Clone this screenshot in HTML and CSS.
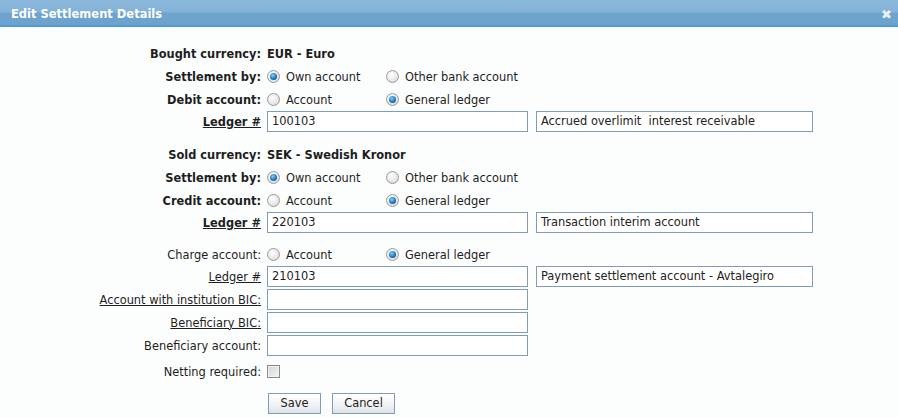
FILE: index.html
```html
<!DOCTYPE html>
<html>
<head>
<meta charset="utf-8">
<link rel="stylesheet" href="styles.css">
</head>
<body>
<div class="dialog">
  <div class="titlebar">
    <span class="title">Edit Settlement Details</span>
    <span class="close">&#x2716;</span>
  </div>
  <div class="form">
    <div class="row r23"><span class="label bold">Bought currency:</span><span class="value bold">EUR - Euro</span></div>
    <div class="row r23"><span class="label bold">Settlement by:</span>
      <span class="value"><label class="opt w119"><span class="radio on"></span>Own account</label><label class="opt"><span class="radio"></span>Other bank account</label></span></div>
    <div class="row r23"><span class="label bold">Debit account:</span>
      <span class="value"><label class="opt w119"><span class="radio"></span>Account</label><label class="opt"><span class="radio on"></span>General ledger</label></span></div>
    <div class="row r21"><span class="label bold u">Ledger #</span>
      <span class="value"><span class="input w1">100103</span><span class="input w2">Accrued overlimit&nbsp; interest receivable</span></span></div>

    <div class="spacer"></div>

    <div class="row r23"><span class="label bold">Sold currency:</span><span class="value bold">SEK - Swedish Kronor</span></div>
    <div class="row r23"><span class="label bold">Settlement by:</span>
      <span class="value"><label class="opt w119"><span class="radio on"></span>Own account</label><label class="opt"><span class="radio"></span>Other bank account</label></span></div>
    <div class="row r23"><span class="label bold">Credit account:</span>
      <span class="value"><label class="opt w119"><span class="radio"></span>Account</label><label class="opt"><span class="radio on"></span>General ledger</label></span></div>
    <div class="row r21"><span class="label bold u">Ledger #</span>
      <span class="value"><span class="input w1">220103</span><span class="input w2">Transaction interim account</span></span></div>

    <div class="spacer s2"></div>

    <div class="row r23"><span class="label">Charge account:</span>
      <span class="value"><label class="opt w119"><span class="radio"></span>Account</label><label class="opt"><span class="radio on"></span>General ledger</label></span></div>
    <div class="row r21 mb2"><span class="label u">Ledger #</span>
      <span class="value"><span class="input w1">210103</span><span class="input w2">Payment settlement account - Avtalegiro</span></span></div>
    <div class="row r21 mb2"><span class="label u">Account with institution BIC:</span>
      <span class="value"><span class="input w1"></span></span></div>
    <div class="row r21 mb2"><span class="label u">Beneficiary BIC:</span>
      <span class="value"><span class="input w1"></span></span></div>
    <div class="row r21"><span class="label">Beneficiary account:</span>
      <span class="value"><span class="input w1"></span></span></div>
    <div class="row rnet"><span class="label">Netting required:</span>
      <span class="value"><span class="check"></span></span></div>
    <div class="row rbtn"><span class="label"></span>
      <span class="value"><span class="btn save">Save</span><span class="btn cancel">Cancel</span></span></div>
  </div>
</div>
</body>
</html>
```

FILE: styles.css
```css
html, body {
  margin: 0;
  padding: 0;
  background: #fcfdfd;
}
body {
  font-family: "DejaVu Sans", Verdana, sans-serif;
  font-size: 11.4px;
  color: #1e1e1e;
}
.dialog {
  width: 898px;
  height: 417px;
  overflow: hidden;
}
.titlebar {
  height: 25px;
  border-bottom: 2px solid #4e9ddb;
  background: linear-gradient(to bottom, #8bb9dc 0%, #85b3d7 48%, #6ea4cd 52%, #6ca3cd 100%);
  display: flex;
  align-items: center;
  justify-content: space-between;
  padding: 0 6px 0 11px;
}
.title {
  color: #fff;
  font-weight: bold;
  font-size: 11.5px;
  margin-top: 3px;
}
.close {
  color: #e8f1f8;
  font-size: 13px;
  font-weight: bold;
  margin-top: 3px;
}
.form {
  padding-top: 15px;
}
.row {
  display: flex;
  align-items: center;
  height: 23px;
}
.r23 { height: 23px; }
.r21 { height: 21px; }
.mb2 { margin-bottom: 2px; }
.rnet { height: 27px; margin-top: 2px; }
.rbtn { height: 23px; margin-top: 7px; }
.spacer { height: 11px; }
.spacer.s2 { height: 10px; }
.label {
  width: 261px;
  text-align: right;
  flex: none;
  white-space: nowrap;
}
.bold { font-weight: bold; }
.u { text-decoration: underline; }
.value {
  margin-left: 6px;
  display: flex;
  align-items: center;
  white-space: nowrap;
}
.opt {
  display: flex;
  align-items: center;
}
.w119 { width: 119px; }
.radio {
  width: 11px;
  height: 11px;
  border-radius: 50%;
  border: 1px solid #9a9a9a;
  background: radial-gradient(circle at 40% 35%, #ffffff 0%, #e6e6e6 60%, #cfcfcf 100%);
  margin-right: 6px;
  position: relative;
  flex: none;
}
.radio.on::after {
  content: "";
  position: absolute;
  left: 2px;
  top: 2px;
  width: 7px;
  height: 7px;
  border-radius: 50%;
  background: radial-gradient(circle at 40% 35%, #7fd0ff 0%, #1e78c0 55%, #0b3e78 100%);
}
.input {
  height: 19px;
  border: 1px solid #7f9db9;
  background: #fff;
  box-sizing: content-box;
  line-height: 19px;
  padding: 0 4px;
  color: #222;
}
.w1 { width: 251px; margin-right: 8px; }
.w2 { width: 267px; }
.check {
  width: 11px;
  height: 11px;
  border: 1px solid #8a8a8a;
  background: linear-gradient(135deg, #d4d4d4 0%, #f4f4f4 100%);
  box-shadow: inset 0 0 0 1px #f0f0f0;
}
.btn {
  height: 19px;
  border: 1px solid #7f9db9;
  background: linear-gradient(to bottom, #ffffff 0%, #f0f2f4 60%, #dde3ea 100%);
  line-height: 19px;
  text-align: center;
  color: #222;
  box-sizing: content-box;
}
.save { width: 51px; margin-left: 1px; }
.cancel { width: 61px; margin-left: 11px; }
```
